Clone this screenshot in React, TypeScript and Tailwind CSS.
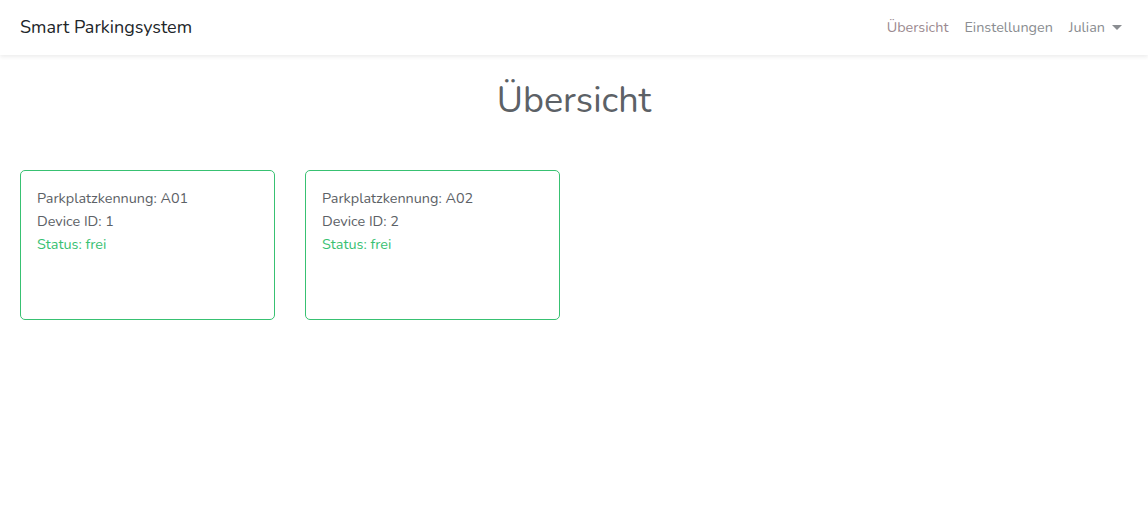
import React from "react";

const spots = [
  { id: "A01", device: 1, status: "frei" },
  { id: "A02", device: 2, status: "frei" },
];

export default function App() {
  return (
    <div className="min-h-screen bg-white text-[14.4px] leading-[1.6] text-[#5c6166]" style={{ fontFamily: "Nunito, Lato, 'Noto Sans', sans-serif" }}>
      <nav className="flex h-[55px] items-center justify-between bg-white pl-5 pr-[26px] shadow-[0_2px_4px_rgba(0,0,0,0.075)]">
        <span className="text-[18px] text-[#212529]">Smart Parkingsystem</span>
        <div className="flex items-center gap-[16px] text-[#8a8d91]">
          <a className="text-[#9b8a90]">Übersicht</a>
          <a>Einstellungen</a>
          <a className="flex items-center">
            Julian
            <span className="ml-[7px] inline-block h-0 w-0 border-x-[5px] border-t-[5px] border-x-transparent border-t-[#8a8d91]" />
          </a>
        </div>
      </nav>
      <main className="px-5">
        <h1 className="mt-[24px] text-center text-[36px] leading-[1.2] text-[#5c6166]">Übersicht</h1>
        <div className="mt-[48px] flex gap-[30px]">
          {spots.map((s) => (
            <div key={s.id} className="h-[150px] w-[255px] rounded-[5px] border border-[#38c172] p-4">
              <div>Parkplatzkennung: {s.id}</div>
              <div>Device ID: {s.device}</div>
              <div className="text-[#38c172]">Status: {s.status}</div>
            </div>
          ))}
        </div>
      </main>
    </div>
  );
}
